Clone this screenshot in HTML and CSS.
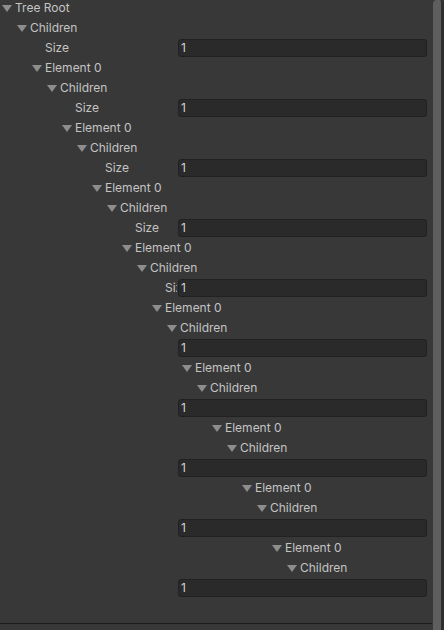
FILE: index.html
```html
<!DOCTYPE html>
<html>
<head>
<meta charset="utf-8">
<link rel="stylesheet" href="styles.css">
</head>
<body>
<div class="window">
  <div class="main">
    <div class="tree">
      <div class="row fold d0"><span class="tri"></span><span class="label">Tree Root</span></div>
      <div class="row fold d1"><span class="tri"></span><span class="label">Children</span></div>
      <div class="row prop"><span class="plabel d2">Size</span><span class="field">1</span></div>
      <div class="row fold d2"><span class="tri"></span><span class="label">Element 0</span></div>
      <div class="row fold d3"><span class="tri"></span><span class="label">Children</span></div>
      <div class="row prop"><span class="plabel d4">Size</span><span class="field">1</span></div>
      <div class="row fold d4"><span class="tri"></span><span class="label">Element 0</span></div>
      <div class="row fold d5"><span class="tri"></span><span class="label">Children</span></div>
      <div class="row prop"><span class="plabel d6">Size</span><span class="field">1</span></div>
      <div class="row fold d6"><span class="tri"></span><span class="label">Element 0</span></div>
      <div class="row fold d7"><span class="tri"></span><span class="label">Children</span></div>
      <div class="row prop"><span class="plabel d8">Size</span><span class="field">1</span></div>
      <div class="row fold d8"><span class="tri"></span><span class="label">Element 0</span></div>
      <div class="row fold d9"><span class="tri"></span><span class="label">Children</span></div>
      <div class="row prop"><span class="plabel d10">Size</span><span class="field">1</span></div>
      <div class="row fold d10"><span class="tri"></span><span class="label">Element 0</span></div>
      <div class="row fold d11"><span class="tri"></span><span class="label">Children</span></div>
      <div class="row prop"><span class="plabel hidden">Size</span><span class="field">1</span></div>
      <div class="row fold d12"><span class="tri"></span><span class="label">Element 0</span></div>
      <div class="row fold d13"><span class="tri"></span><span class="label">Children</span></div>
      <div class="row prop"><span class="plabel hidden">Size</span><span class="field">1</span></div>
      <div class="row fold d14"><span class="tri"></span><span class="label">Element 0</span></div>
      <div class="row fold d15"><span class="tri"></span><span class="label">Children</span></div>
      <div class="row prop"><span class="plabel hidden">Size</span><span class="field">1</span></div>
      <div class="row fold d16"><span class="tri"></span><span class="label">Element 0</span></div>
      <div class="row fold d17"><span class="tri"></span><span class="label">Children</span></div>
      <div class="row prop"><span class="plabel hidden">Size</span><span class="field">1</span></div>
      <div class="row fold d18"><span class="tri"></span><span class="label">Element 0</span></div>
      <div class="row fold d19"><span class="tri"></span><span class="label">Children</span></div>
      <div class="row prop"><span class="plabel hidden">Size</span><span class="field">1</span></div>
    </div>
    <div class="spacer"></div>
    <div class="footer"></div>
  </div>
  <div class="scroll"><div class="thumb"></div></div>
</div>
</body>
</html>
```

FILE: styles.css
```css
html, body {
  margin: 0;
  padding: 0;
  background: #383838;
}
body {
  width: 444px;
  height: 630px;
  overflow: hidden;
  font-family: Inter, "Noto Sans", "Liberation Sans", sans-serif;
  font-size: 12px;
  color: #c4c4c4;
}
.window {
  display: flex;
  height: 630px;
}
.main {
  width: 432px;
  display: flex;
  flex-direction: column;
}
.tree {
  display: flex;
  flex-direction: column;
  gap: 2px;
  margin-top: -1px;
}
.row {
  height: 18px;
  display: flex;
  align-items: center;
  white-space: nowrap;
}
.fold .tri {
  width: 0;
  height: 0;
  border-left: 5px solid transparent;
  border-right: 5px solid transparent;
  border-top: 7px solid #8d8d8d;
  margin-right: 3px;
  margin-top: 1px;
}
.label { line-height: 18px; }
.d0 { padding-left: 2px; }
.d1 { padding-left: 17px; }
.d2 { padding-left: 32px; }
.d3 { padding-left: 47px; }
.d4 { padding-left: 62px; }
.d5 { padding-left: 77px; }
.d6 { padding-left: 92px; }
.d7 { padding-left: 107px; }
.d8 { padding-left: 122px; }
.d9 { padding-left: 137px; }
.d10 { padding-left: 152px; }
.d11 { padding-left: 167px; }
.d12 { padding-left: 182px; }
.d13 { padding-left: 197px; }
.d14 { padding-left: 212px; }
.d15 { padding-left: 227px; }
.d16 { padding-left: 242px; }
.d17 { padding-left: 257px; }
.d18 { padding-left: 272px; }
.d19 { padding-left: 287px; }
.plabel {
  box-sizing: border-box;
  width: 177px;
  flex: 0 0 177px;
  overflow: hidden;
  margin-right: 1px;
  line-height: 18px;
}
.prop .plabel.d2 { padding-left: 45px; }
.prop .plabel.d4 { padding-left: 75px; }
.prop .plabel.d6 { padding-left: 105px; }
.prop .plabel.d8 { padding-left: 135px; }
.prop .plabel.d10 { padding-left: 165px; }
.prop .plabel.hidden { visibility: hidden; }
.field {
  box-sizing: border-box;
  width: 249px;
  height: 18px;
  background: #2a2a2a;
  border: 1px solid #212121;
  border-radius: 3px;
  padding-left: 2px;
  line-height: 16px;
  color: #d2d2d2;
}
.spacer { flex: 1; }
.footer {
  height: 6px;
  border-top: 1px solid #1c1c1c;
  background: #383838;
}
.scroll {
  width: 12px;
  background: #383838;
  display: flex;
  padding-left: 1px;
  box-sizing: border-box;
}
.thumb {
  width: 8px;
  background: #5e5e5e;
  border-radius: 4px 4px 0 0;
  border-right: 3px solid #2e2e2e;
}
```
